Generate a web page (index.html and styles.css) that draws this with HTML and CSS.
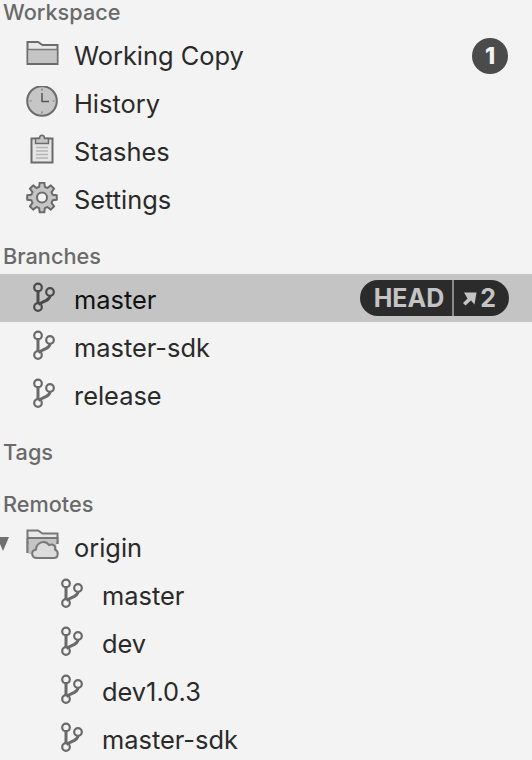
FILE: index.html
```html
<!DOCTYPE html>
<html lang="en">
<head>
<meta charset="utf-8">
<title>Sidebar</title>
<link rel="stylesheet" href="styles.css">
</head>
<body>
<svg class="defs" width="0" height="0" aria-hidden="true">
  <defs>
    <g id="branch" fill="none">
      <path d="M7 8V22" stroke-width="3"/>
      <path d="M19 13.500C19 18.500 13 18.500 7.500 22.500" stroke-width="3"/>
      <circle cx="7" cy="5.500" r="3.800" stroke-width="2.200"/>
      <circle cx="19" cy="10" r="3.800" stroke-width="2.200"/>
      <circle cx="7" cy="25" r="3.800" stroke-width="2.200"/>
    </g>
  </defs>
</svg>
<nav class="sidebar">
  <h2 class="head head-first">Workspace</h2>
  <div class="row">
    <svg class="icon" viewBox="0 0 36 36"><path d="M3.500 4H14L18.500 7H33.500V26H3.500Z" fill="#e8e8e8" stroke="#6b6b6b" stroke-width="2"/><path d="M4.500 12H32.500V25H4.500Z" fill="#c4c4c4"/><path d="M4 11.500H33" stroke="#7a7a7a" stroke-width="1.500" fill="none"/></svg>
    <span class="label">Working Copy</span>
    <span class="count">1</span>
  </div>
  <div class="row">
    <svg class="icon" viewBox="0 0 36 36"><circle cx="18" cy="15" r="14.800" fill="#c6c6c6" stroke="#6b6b6b" stroke-width="2"/><path d="M18 7V15.500H25" fill="none" stroke="#555" stroke-width="1.500"/><path d="M18 2.500V4.500M18 25.500V27.500M5.500 15H7.500M28.500 15H30.500" stroke="#777" stroke-width="1.200"/></svg>
    <span class="label">History</span>
  </div>
  <div class="row">
    <svg class="icon" viewBox="0 0 36 36"><path d="M7.500 4.500H28.500V28.500H7.500Z" fill="#e6e6e6" stroke="#6b6b6b" stroke-width="2"/><path d="M11.500 9.500V4.500H15.500C15.500 0 20.500 0 20.500 4.500H24.500V9.500Z" fill="#c4c4c4" stroke="#6b6b6b" stroke-width="1.500"/><path d="M12 13.500H24M12 17H24M12 20.500H24M12 24H24" stroke="#b5b5b5" stroke-width="1.600"/></svg>
    <span class="label">Stashes</span>
  </div>
  <div class="row">
    <svg class="icon" viewBox="0 0 36 36"><g transform="translate(18 15.500)"><path d="M-2.850-10.600L-2.350-14.800L2.350-14.800L2.850-10.600L5.480-9.510L8.800-12.130L12.130-8.800L9.510-5.480L10.600-2.850L14.800-2.350L14.800 2.350L10.600 2.850L9.510 5.480L12.130 8.800L8.800 12.130L5.480 9.510L2.850 10.600L2.350 14.800L-2.350 14.800L-2.850 10.600L-5.480 9.510L-8.800 12.130L-12.130 8.800L-9.510 5.480L-10.600 2.850L-14.800 2.350L-14.800-2.350L-10.600-2.850L-9.510-5.480L-12.130-8.800L-8.800-12.130L-5.480-9.510Z" fill="#c4c4c4" stroke="#6b6b6b" stroke-width="2" stroke-linejoin="round"/><circle r="5" fill="#f3f3f3" stroke="#6b6b6b" stroke-width="2"/></g></svg>
    <span class="label">Settings</span>
  </div>

  <h2 class="head head-branches">Branches</h2>
  <div class="row low selected">
    <svg class="icon branch" viewBox="0 0 36 36"><use href="#branch" x="7" y="2"/></svg>
    <span class="label">master</span>
    <span class="pill"><span class="pill-head">HEAD</span><span class="pill-ahead"><svg class="arrow" viewBox="0 0 15 15"><path d="M1 12L5.500 7.500L2 1.500H14.500L12.500 13.500L9 9.500L3.500 14.500Z"/></svg>2</span></span>
  </div>
  <div class="row low">
    <svg class="icon branch" viewBox="0 0 36 36"><use href="#branch" x="7" y="2"/></svg>
    <span class="label">master-sdk</span>
  </div>
  <div class="row low">
    <svg class="icon branch" viewBox="0 0 36 36"><use href="#branch" x="7" y="2"/></svg>
    <span class="label">release</span>
  </div>

  <h2 class="head head-tags">Tags</h2>
  <h2 class="head head-remotes">Remotes</h2>
  <div class="row low origin">
    <span class="twisty"></span>
    <svg class="icon" viewBox="0 0 36 36"><path d="M3.500 25V2.500H14L18.500 5.500H33.500V15H3.500" fill="#e8e8e8" stroke="#777" stroke-width="2"/><path d="M4.500 10.500H32.500V26H4.500Z" fill="#c4c4c4"/><path d="M3.500 25V10M4 10H33.500V16" fill="none" stroke="#777" stroke-width="1.800"/><path d="M13 30C7 30 6.500 22.500 12 21.500C12.500 14 21 11.500 25 17C29 15.500 32 18 31 21.500C35 23 34.500 30 30 30Z" fill="#dcdcdc" stroke="#777" stroke-width="2"/></svg>
    <span class="label">origin</span>
  </div>
  <div class="row low nested">
    <svg class="icon branch" viewBox="0 0 36 36"><use href="#branch" x="7" y="2"/></svg>
    <span class="label">master</span>
  </div>
  <div class="row low nested">
    <svg class="icon branch" viewBox="0 0 36 36"><use href="#branch" x="7" y="2"/></svg>
    <span class="label">dev</span>
  </div>
  <div class="row low nested">
    <svg class="icon branch" viewBox="0 0 36 36"><use href="#branch" x="7" y="2"/></svg>
    <span class="label">dev1.0.3</span>
  </div>
  <div class="row low nested">
    <svg class="icon branch" viewBox="0 0 36 36"><use href="#branch" x="7" y="2"/></svg>
    <span class="label">master-sdk</span>
  </div>
</nav>
</body>
</html>
```
FILE: styles.css
```css
html, body {
  margin: 0;
  height: 100%;
  overflow: hidden;
  background: #f3f3f3;
}

.defs {
  display: block;
  height: 0;
}

.sidebar {
  display: flex;
  flex-direction: column;
  font-family: Inter, "Liberation Sans", sans-serif;
  color: #2a2a2a;
}

.head {
  margin: 0;
  box-sizing: border-box;
  height: 52px;
  padding: 0 0 5px 3px;
  display: flex;
  align-items: flex-end;
  font-size: 21.7px;
  line-height: 26px;
  font-weight: 500;
  color: #6a6a6a;
}

.head-first {
  height: 32px;
  padding-bottom: 7px;
}

.head-branches {
  height: 50px;
  padding-bottom: 5px;
}

.head-remotes {
  padding-bottom: 5px;
}

.row {
  flex: none;
  height: 48px;
  display: flex;
  align-items: center;
  padding: 0 23px 0 24px;
}

.row.nested {
  padding-left: 52px;
}

.row.selected {
  background: #c4c4c4;
  color: #111;
}

.row.origin {
  position: relative;
}

.icon {
  flex: none;
  width: 36px;
  height: 36px;
  margin-right: 14px;
}

.branch {
  stroke: #6a6a6a;
}

.selected .branch {
  stroke: #4a4a4a;
}

.label {
  flex: 1;
  font-size: 25.4px;
  line-height: 30px;
}

.low .label {
  padding-top: 4px;
}

.count {
  flex: none;
  width: 36px;
  height: 36px;
  border-radius: 50%;
  background: #4b4b4b;
  color: #f3f3f3;
  font-size: 23px;
  line-height: 36px;
  font-weight: 800;
  text-align: center;
  margin-right: 1px;
}

.pill {
  flex: none;
  display: flex;
  height: 36px;
  border-radius: 18px;
  overflow: hidden;
  background: #2b2b2b;
  color: #c4c4c4;
  font-size: 25px;
  line-height: 36px;
  font-weight: 700;
}

.pill-head {
  padding: 0 8px 0 14px;
  border-right: 2px solid #8a8a8a;
}

.pill-ahead {
  display: flex;
  align-items: center;
  padding: 0 13px 0 8px;
}

.arrow {
  width: 15px;
  height: 15px;
  margin-right: 3px;
  fill: #c4c4c4;
}

.twisty {
  position: absolute;
  left: -3px;
  top: 15px;
  width: 0;
  height: 0;
  border-left: 6.5px solid transparent;
  border-right: 6.5px solid transparent;
  border-top: 14px solid #707070;
}
```
